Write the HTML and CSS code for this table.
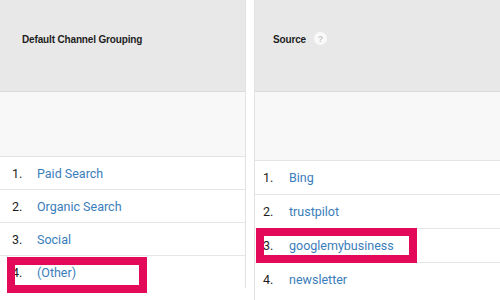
FILE: index.html
```html
<!DOCTYPE html>
<html>
<head>
<meta charset="utf-8">
<link rel="stylesheet" href="styles.css">
</head>
<body>
<div class="page">
  <section class="panel panel-left">
    <div class="head"><span class="title">Default Channel Grouping</span></div>
    <div class="sub"></div>
    <div class="row"><span class="num">1.</span><a class="link">Paid Search</a></div>
    <div class="row"><span class="num">2.</span><a class="link">Organic Search</a></div>
    <div class="row"><span class="num">3.</span><a class="link">Social</a></div>
    <div class="row row-last"><span class="num">4.</span><a class="link">(Other)</a><span class="mark mark-left"></span></div>
  </section>
  <section class="panel panel-right">
    <div class="head"><span class="title">Source</span><span class="help">?</span></div>
    <div class="sub"></div>
    <div class="row"><span class="num">1.</span><a class="link">Bing</a></div>
    <div class="row"><span class="num">2.</span><a class="link">trustpilot</a></div>
    <div class="row"><span class="num">3.</span><a class="link">googlemybusiness</a><span class="mark mark-right"></span></div>
    <div class="row row-last"><span class="num">4.</span><a class="link">newsletter</a></div>
  </section>
</div>
</body>
</html>
```
FILE: styles.css
```css
html, body {
  margin: 0;
  padding: 0;
  background: #ffffff;
}
body {
  font-family: Roboto, "Liberation Sans", Arial, sans-serif;
  width: 500px;
  height: 300px;
  overflow: hidden;
}
.page {
  display: flex;
  gap: 8px;
  height: 300px;
}
.panel {
  display: flex;
  flex-direction: column;
}
.panel-left {
  width: 245px;
  border-right: 1px solid #e2e2e2;
  height: 288px;
}
.panel-right {
  flex: 1;
  border-left: 1px solid #e2e2e2;
}
.head {
  background: #e8e8e8;
  border-bottom: 1px solid #dcdcdc;
  display: flex;
  align-items: center;
  padding-bottom: 12px;
  height: 79px;
}
.panel-left .head { padding-left: 22px; }
.panel-right .head { padding-left: 18px; }
.title {
  font-family: "Liberation Sans", Arial, sans-serif;
  font-weight: bold;
  font-size: 10px;
  letter-spacing: -0.15px;
  color: #1e1e1e;
}
.help {
  display: inline-flex;
  align-items: center;
  justify-content: center;
  width: 13px;
  height: 13px;
  margin-left: 8px;
  margin-top: -2px;
  border-radius: 50%;
  background: #f9f9f9;
  color: #c8c8c8;
  font-family: "Liberation Sans", Arial, sans-serif;
  font-weight: bold;
  font-size: 9px;
}
.sub {
  background: #f8f8f8;
  border-bottom: 1px solid #e4e4e4;
}
.panel-left .sub { height: 64px; }
.panel-right .sub { height: 68px; }
.row {
  position: relative;
  display: flex;
  align-items: center;
  background: #ffffff;
  border-bottom: 1px solid #e6e6e6;
  font-size: 12.5px;
}
.panel-left .row { height: 32px; padding-left: 12px; }
.panel-right .row { height: 33px; padding-left: 8px; }
.row-last { border-bottom: none; }
.num {
  color: #1e1e1e;
  width: 25px;
}
.panel-right .num { width: 26px; }
.link {
  color: #3a7dbb;
  text-decoration: none;
}
.mark {
  position: absolute;
  border: 8px solid #e40a5a;
  box-sizing: border-box;
}
.mark-left {
  left: 7px;
  top: 1px;
  width: 140px;
  height: 36px;
}
.mark-right {
  left: 1px;
  top: -1px;
  width: 161px;
  height: 35px;
}
```
